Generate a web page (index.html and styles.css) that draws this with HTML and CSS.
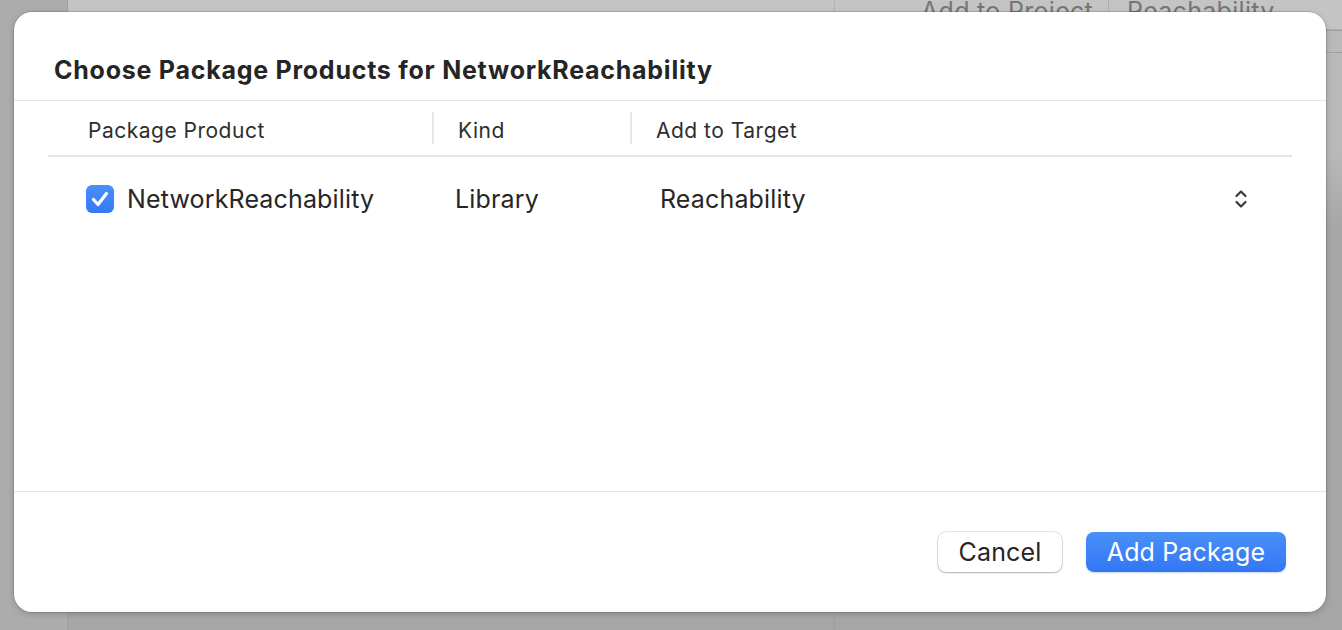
FILE: index.html
```html
<!DOCTYPE html>
<html>
<head>
<meta charset="utf-8">
<link rel="stylesheet" href="styles.css">
</head>
<body>
<div class="backdrop">
  <div class="sidebar"></div>
  <div class="main">
    <div class="toolbar">
      <div class="pane-left"></div>
      <div class="pane-right">
        <span class="tb-text">Add to Project</span>
        <span class="tb-div"></span>
        <span class="tb-text">Reachability</span>
      </div>
    </div>
    <div class="content">
      <div class="content-left"></div>
      <div class="content-right">
        <div class="rline"></div>
        <div class="rline"></div>
      </div>
    </div>
  </div>
</div>

<div class="sheet">
  <h1 class="title">Choose Package Products for NetworkReachability</h1>
  <div class="table">
    <div class="thead">
      <div class="th col1">Package Product</div>
      <div class="th col2">Kind</div>
      <div class="th col3">Add to Target</div>
    </div>
    <div class="trow">
      <div class="td col1">
        <span class="checkbox">
          <svg width="28" height="28" viewBox="0 0 28 28"><path d="M7.5 14.5 L12 19.5 L20.5 8.5" fill="none" stroke="#fff" stroke-width="3.2" stroke-linecap="round" stroke-linejoin="round"/></svg>
        </span>
        <span class="name">NetworkReachability</span>
      </div>
      <div class="td col2">Library</div>
      <div class="td col3">
        <span class="target">Reachability</span>
        <svg class="chev" width="14" height="22" viewBox="0 0 14 22"><path d="M2.5 8 L7 3.5 L11.5 8 M2.5 14 L7 18.5 L11.5 14" fill="none" stroke="#3a3a3a" stroke-width="2.2" stroke-linecap="round" stroke-linejoin="round"/></svg>
      </div>
    </div>
  </div>
  <div class="footer">
    <button class="btn btn-cancel">Cancel</button>
    <button class="btn btn-primary">Add Package</button>
  </div>
</div>
</body>
</html>
```
FILE: styles.css
```css
* { box-sizing: border-box; }
html, body { margin: 0; padding: 0; }
body {
  width: 1342px;
  height: 630px;
  overflow: hidden;
  font-family: Inter, "Noto Sans", "Liberation Sans", sans-serif;
  background: #a9a9a9;
  position: relative;
}
.backdrop {
  display: flex;
  width: 1342px;
  height: 630px;
}
.sidebar {
  width: 68px;
  background: #acacac;
  border-right: 1px solid #a0a0a0;
}
.main {
  flex: 1;
  display: flex;
  flex-direction: column;
}
.toolbar {
  height: 30px;
  display: flex;
  background: #c4c4c4;
  border-bottom: 1px solid #ababab;
}
.pane-left {
  width: 767px;
  border-right: 1px solid #b3b3b3;
}
.pane-right {
  flex: 1;
  display: flex;
  align-items: flex-end;
  padding-left: 86px;
  overflow: hidden;
}
.tb-text {
  font-size: 25px;
  letter-spacing: 0.3px;
  color: #767676;
  line-height: 24px;
  margin-bottom: 6px;
}
.tb-div {
  width: 1px;
  height: 30px;
  background: #b0b0b0;
  margin: 0 18px 0 15px;
  align-self: stretch;
}
.content {
  flex: 1;
  display: flex;
  background: #a6a6a6;
}
.content-left {
  width: 767px;
  border-right: 1px solid #9f9f9f;
}
.content-right {
  flex: 1;
  display: flex;
  flex-direction: column;
  gap: 21px;
  background: linear-gradient(#b9b9b9 0, #b9b9b9 120px, #a6a6a6 200px);
}
.rline {
  height: 1px;
  background: #a0a0a0;
}

.sheet {
  position: absolute;
  left: 14px;
  top: 12px;
  width: 1312px;
  height: 600px;
  background: #ffffff;
  border-radius: 18px;
  box-shadow: 0 0 0 0.5px rgba(0,0,0,0.25), 0 2px 6px rgba(0,0,0,0.18);
  display: flex;
  flex-direction: column;
}
.title {
  margin: 0;
  padding: 42px 0 0 40px;
  height: 89px;
  font-size: 25px;
  font-weight: 700;
  color: #252525;
  letter-spacing: 0.75px;
  line-height: 32px;
  border-bottom: 1.5px solid #e4e4e4;
}
.table {
  flex: 1;
  padding: 0 34px;
  border-bottom: 1.5px solid #e4e4e4;
}
.thead {
  display: flex;
  height: 56px;
  align-items: center;
  border-bottom: 2px solid #e4e4e4;
}
.th {
  font-size: 21px;
  letter-spacing: 0.5px;
  color: #2e2e2e;
  height: 32px;
  line-height: 37px;
}
.thead .col1 { width: 384px; padding-left: 40px; }
.thead .col2 { width: 198px; padding-left: 24px; border-left: 2px solid #e6e6e6; }
.thead .col3 { flex: 1; padding-left: 24px; border-left: 2px solid #e6e6e6; }
.trow {
  display: flex;
  align-items: center;
  height: 84px;
}
.td {
  font-size: 25px;
  letter-spacing: 0.15px;
  color: #262626;
}
.trow .col1 { width: 384px; padding-left: 38px; display: flex; align-items: center; gap: 13px; }
.trow .col2 { width: 198px; padding-left: 23px; }
.trow .col3 { flex: 1; padding-left: 30px; display: flex; align-items: center; justify-content: space-between; padding-right: 44px; }
.checkbox {
  width: 28px;
  height: 28px;
  border-radius: 6px;
  background: linear-gradient(#4b8ff8, #3479f4);
  display: inline-flex;
}
.chev { display: block; }
.footer {
  height: 120px;
  display: flex;
  justify-content: flex-end;
  align-items: flex-start;
  padding: 40px 40px 0 0;
  gap: 24px;
}
.btn {
  font-family: inherit;
  font-size: 25px;
  letter-spacing: 0.15px;
  height: 40px;
  border-radius: 8px;
  border: none;
  padding: 0;
  line-height: 40px;
}
.btn-cancel {
  width: 124px;
  background: #ffffff;
  color: #262626;
  box-shadow: 0 0 0 0.5px rgba(0,0,0,0.18), 0 1px 2px rgba(0,0,0,0.25);
}
.btn-primary {
  width: 200px;
  color: #ffffff;
  background: linear-gradient(#4a90f8, #3277f5);
  box-shadow: 0 1px 2px rgba(40,100,220,0.25);
}
```
